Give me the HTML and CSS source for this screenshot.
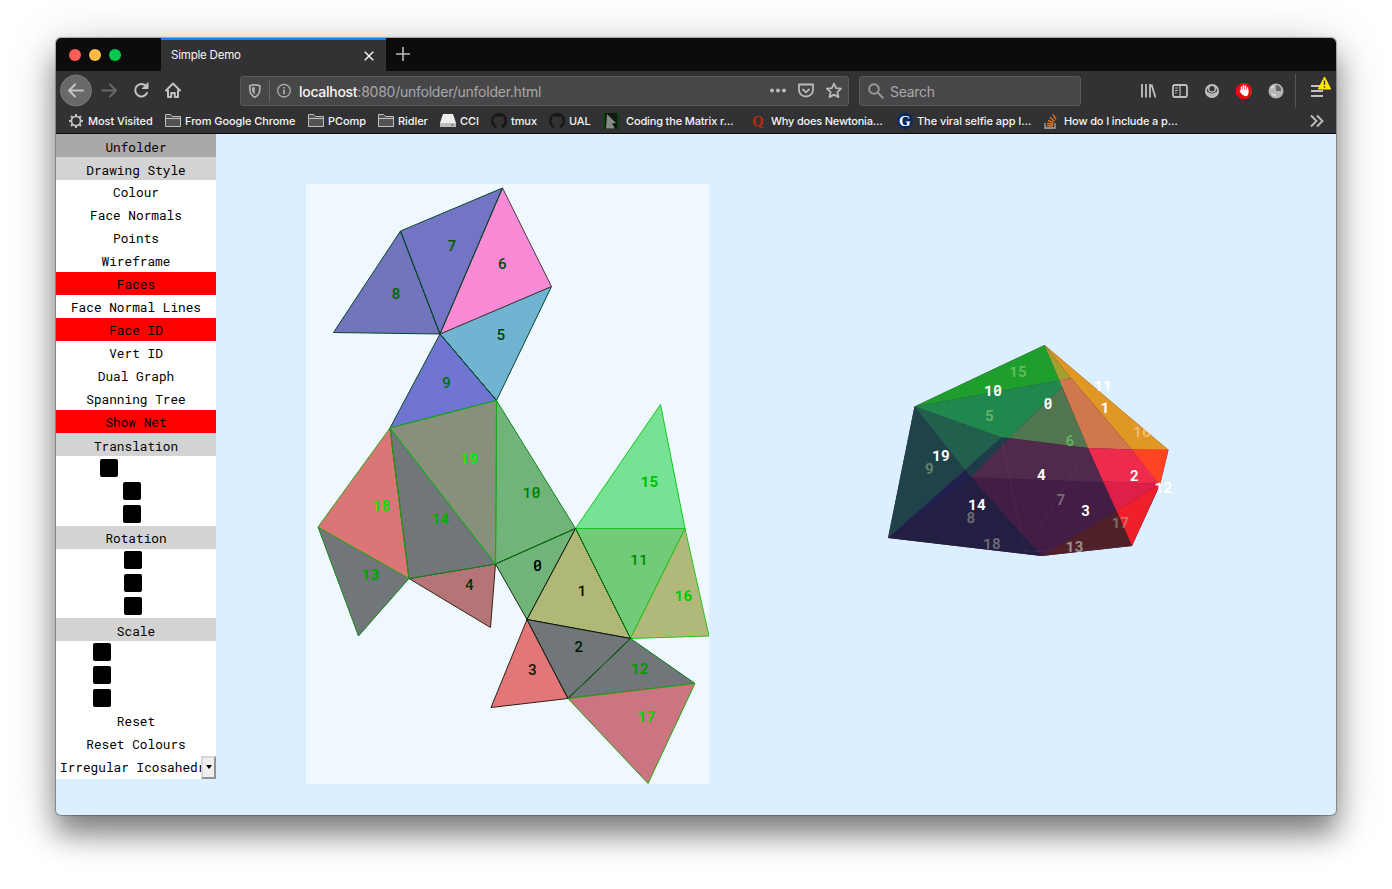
FILE: index.html
```html
<!DOCTYPE html>
<html lang="en">
<head>
<meta charset="utf-8">
<title>Simple Demo</title>
<link rel="stylesheet" href="styles.css">
</head>
<body>
<div class="window">
  <div class="tabs">
    <div class="lights"><i class="red"></i><i class="amber"></i><i class="green"></i></div>
    <div class="tab"><span class="tab-title">Simple Demo</span>
      <svg width="10" height="10" viewBox="0 0 10 10"><path d="M.8.8l8.4 8.4M9.2.8L.8 9.2" stroke="#f2f2f2" stroke-width="1.5"/></svg>
    </div>
    <svg class="plus" width="14" height="14" viewBox="0 0 14 14"><path d="M7 0v14M0 7h14" stroke="#bbb" stroke-width="1.6"/></svg>
  </div>
  <div class="toolbar">
    <svg width="128" height="34" viewBox="0 0 128 34" fill="none" stroke="#c3c3c5" stroke-width="2" stroke-linecap="round" stroke-linejoin="round">
      <circle cx="16" cy="16.500" r="15.500" fill="#69696a" stroke="#78787a" stroke-width="1"/>
      <path d="M9 16.500h14M15 10.500l-6 6 6 6"/>
      <path d="M42 16.500h14M50 10.500l6 6-6 6" stroke="#69696b"/>
      <path d="M87 19a6.200 6.200 0 1 1-1-7"/><path d="M88 9v5.500h-5.500z" fill="#c3c3c5" stroke-width="1"/>
      <path d="M106 16.500l7-7 7 7M108 16.500v6.500h3.200v-4h3.600v4h3.200V16.500"/>
    </svg>
    <div class="address">
      <svg width="52" height="28" viewBox="0 0 52 28" fill="none" stroke="#b1b1b3" stroke-width="1.700">
        <path d="M8.800 8.800q5-2 10 0v3.500q0 5.500-5 8-5-2.500-5-8z"/><path d="M13.800 10v7.500q-3-2-3-5.500v-1.500z" fill="#b1b1b3" stroke="none"/>
        <path d="M28.500 3v22" stroke="#646466" stroke-width="1"/>
        <circle cx="43" cy="13.700" r="6.300" stroke-width="1.300"/><path d="M43 12.700v4.500M43 9.900v1.500"/>
      </svg>
      <span class="url"><b>localhost</b>:8080/unfolder/unfolder.html</span>
      <svg width="78" height="28" viewBox="0 0 78 28" fill="none" stroke="#b9b9bb" stroke-width="1.800" stroke-linejoin="round">
        <g fill="#b9b9bb" stroke="none"><circle cx="8" cy="13.500" r="2"/><circle cx="14" cy="13.500" r="2"/><circle cx="20" cy="13.500" r="2"/></g>
        <path d="M35 7.500h14v5.500a7 6.500 0 0 1-14 0zM38.500 12l3.500 3.300 3.500-3.300"/>
        <path d="M70 6.500l2.100 4.600 5 .6-3.700 3.400 1 5-4.400-2.500-4.400 2.500 1-5-3.700-3.400 5-.6z"/>
      </svg>
    </div>
    <div class="search">
      <svg width="16" height="16" viewBox="0 0 16 16" fill="none" stroke="#98989a" stroke-width="2"><circle cx="6" cy="6" r="4.800"/><path d="M9.800 9.800l5.500 5.500"/></svg>
      <span>Search</span>
    </div>
    <svg class="tools" width="196" height="34" viewBox="0 0 196 34" fill="none" stroke="#c0c0c2" stroke-width="1.800">
      <path d="M2 10v13.500M6 10v13.500M10 10v13.500M11.500 10.500l4 13"/>
      <rect x="33" y="11" width="14" height="12" rx="2"/><path d="M40 11v12M35 14h3M35 16.500h3M35 19h2" stroke-width="1.200"/>
      <circle cx="72" cy="17" r="6" stroke-width="2"/><circle cx="72" cy="14.700" r="3.300" stroke-width="1.400" fill="#323234"/><path d="M67 18.500q5 4.500 10 0" stroke-width="2.200"/>
      <path d="M100.700 9h6.600l4.700 4.700v6.600l-4.700 4.700h-6.600L96 20.300v-6.600z" fill="#e40d0d" stroke="none"/>
      <path d="M101.500 17v-4M103.500 17v-5.500M105.500 17v-5M107.500 18v-4" stroke="#fff" stroke-width="1.500" stroke-linecap="round"/><path d="M100.500 16h8v3q-1 4-4 3-3-1-5-5z" fill="#fff" stroke="none"/>
      <circle cx="136" cy="17" r="7.500" fill="#b5b5b5" stroke="none"/><path d="M136 17V11q6 1 5 6z" fill="#666" stroke="none"/><path d="M132 20l4 2M131 14l3-2" stroke="#dedede"/>
      <path d="M155.500 0v34" stroke="#565658" stroke-width="1"/>
      <path d="M171 12h12M171 17h12M171 22h12" stroke-width="2"/>
      <path d="M184.500 3.500l6.200 12h-12.400z" transform="translate(0 -.5)" fill="#ffe900" stroke="#ffe900" stroke-width="1" stroke-linejoin="round"/><path d="M184.500 6.500v4.500M184.500 12.300v1.500" stroke="#3b3a10" stroke-width="1.400"/>
    </svg>
  </div>
  <div class="bookmarks">
    <div class="mark w97"><svg width="16" height="16" viewBox="0 0 16 16" fill="none" stroke="#c0c0c2"><circle cx="8" cy="8" r="4.600" stroke-width="1.800"/><path d="M8 1v2.500M8 12.500V15M1 8h2.500M12.500 8H15M3 3l2 2M11 11l2 2M3 13l2-2M11 5l2-2" stroke-width="2"/></svg><span>Most Visited</span></div>
    <div class="mark w143"><svg width="16" height="16" viewBox="0 0 16 16"><path d="M.5 13.500v-12h5l2 2h8v10zM.5 5.500h15" fill="#535355" stroke="#c0c0c2"/></svg><span>From Google Chrome</span></div>
    <div class="mark w70"><svg width="16" height="16" viewBox="0 0 16 16"><path d="M.5 13.500v-12h5l2 2h8v10zM.5 5.500h15" fill="#535355" stroke="#c0c0c2"/></svg><span>PComp</span></div>
    <div class="mark w62"><svg width="16" height="16" viewBox="0 0 16 16"><path d="M.5 13.500v-12h5l2 2h8v10zM.5 5.500h15" fill="#535355" stroke="#c0c0c2"/></svg><span>Ridler</span></div>
    <div class="mark w51"><svg width="16" height="16" viewBox="0 0 16 16"><path d="M3 1h10l3 9v4H0v-4z" fill="#eee"/><path d="M0 10h16v4H0z" fill="#bdbdbd"/><path d="M11 12h3" stroke="#666"/></svg><span>CCI</span></div>
    <div class="mark w58"><svg width="16" height="16" viewBox="0 0 16 16"><path d="M5.500 15.500v-2q-2 .5-3-1.500 1.800 1 3 0-3.500-1-3-5l1-2-.2-2 2.200.7a8 8 0 0 1 5 0l2.200-.7-.2 2 1 2q.5 4-3 5 .5 1 .3 3.500A8 8 0 1 0 5.500 15.500z" fill="#171718"/></svg><span>tmux</span></div>
    <div class="mark w54"><svg width="16" height="16" viewBox="0 0 16 16"><path d="M5.500 15.500v-2q-2 .5-3-1.500 1.800 1 3 0-3.500-1-3-5l1-2-.2-2 2.200.7a8 8 0 0 1 5 0l2.200-.7-.2 2 1 2q.5 4-3 5 .5 1 .3 3.500A8 8 0 1 0 5.500 15.500z" fill="#171718"/></svg><span>UAL</span></div>
    <div class="mark wide w147"><svg width="16" height="16" viewBox="0 0 16 16"><path d="M0 0h16v16H0z" fill="#121712"/><path d="M1 0v16M15 0v16" stroke="#07540f" stroke-width="1.500"/><path d="M4 1l9 9-4 .5 3 5H3z" fill="#858c85"/></svg><span>Coding the Matrix r…</span></div>
    <div class="mark w147 q"><svg width="16" height="16" viewBox="0 0 16 16"><text x="2" y="13" class="serif" fill="#b92b11">Q</text></svg><span>Why does Newtonia…</span></div>
    <div class="mark w147"><svg width="16" height="16" viewBox="0 0 16 16"><circle cx="8" cy="8" r="8" fill="#052962"/><text x="2" y="13" class="serif" fill="#fff">G</text></svg><span>The viral selfie app I…</span></div>
    <div class="mark last"><svg width="16" height="16" viewBox="0 0 16 16" fill="none"><path d="M1 10v5h10v-5" stroke="#aaa" stroke-width="1.300"/><path d="M3 12.700h6M3.200 10.200l6 1M4 7.300l5.500 2.300M6 4.200l4.500 4M9 1.500l3 5" stroke="#e87922" stroke-width="1.400"/></svg><span>How do I include a p…</span></div>
    <svg class="more" width="14" height="14" viewBox="0 0 14 14"><path d="M1 1.500L6.500 7 1 12.500M7 1.500L12.500 7 7 12.500" fill="none" stroke="#c0c0c2" stroke-width="1.800"/></svg>
  </div>
  <div class="page">
    <div class="side">
      <div class="row title">Unfolder</div>
      <div class="row head">Drawing Style</div>
      <div class="row">Colour</div><div class="row">Face Normals</div><div class="row">Points</div><div class="row">Wireframe</div>
      <div class="row on">Faces</div><div class="row">Face Normal Lines</div><div class="row on">Face ID</div>
      <div class="row">Vert ID</div><div class="row">Dual Graph</div><div class="row">Spanning Tree</div><div class="row on">Show Net</div>
      <div class="row head">Translation</div>
      <div class="sliders translation"><i class="p44"></i><i class="p67"></i><i class="p67"></i></div>
      <div class="row head rotation">Rotation</div>
      <div class="sliders"><i class="p68"></i><i class="p68"></i><i class="p68"></i></div>
      <div class="row head">Scale</div>
      <div class="sliders"><i class="p37"></i><i class="p37"></i><i class="p37"></i></div>
      <div class="row reset">Reset</div><div class="row reset">Reset Colours</div>
      <div class="select"><span>Irregular Icosahedron</span><div class="drop"><b></b></div></div>
    </div>
    <svg class="net" width="403" height="600" viewBox="306 184 403 600">
      <g stroke-width="1" stroke-linejoin="round">
        <g stroke="#08452b">
          <path d="M400.500 231L333.500 332.500 440 334z" fill="#7274bd"/>
          <path d="M400.500 231L502.500 188 440 334z" fill="#7474c4"/>
          <path d="M440 334L551.500 286.500 496.500 400.500z" fill="#70b4d2"/>
          <path d="M502.500 188L551.500 286.500 440 334z" fill="#fa8ad5" stroke="#473b42"/>
          <path d="M440 334L496.500 400.500 390 428z" fill="#7075d2"/>
          <path d="M502.500 188L440 334 400.500 231M440 334L496.500 400.500" fill="none"/>
        </g>
        <path d="M496.500 400.500L575.500 528.500 495.500 564z" fill="#70b479" stroke="#118417"/>
        <path d="M575.500 528.500L527 619.500 495.500 564z" fill="#70b479" stroke="#102d10"/>
        <path d="M575.500 528.500L685 528.500 630.500 638.500z" fill="#72cb79" stroke="#079411"/>
        <path d="M575.500 528.500L660.500 404.500 685 528.500z" fill="#77e194" stroke="#0bcb17"/>
        <path d="M685 528.500L709 636 630.500 638.500z" fill="#b1b97a" stroke="#25c515"/>
        <path d="M575.500 528.500L630.500 638.500 527 619.500z" fill="#b0b878" stroke="#111a05"/>
        <path d="M575.500 528.500L630.500 638.500" stroke="#087a0b"/>
        <path d="M527 619.500L568 698.500 491 707.500z" fill="#e27678" stroke="#32200f"/>
        <path d="M630.500 638.500L695 683.500 568 698.500z" fill="#707679" stroke="#08750d"/>
        <path d="M527 619.500L630.500 638.500 568 698.500z" fill="#707679" stroke="#07170b"/>
        <path d="M630.500 638.500L568 698.500" stroke="#08650d"/>
        <path d="M568 698.500L695 683.500 648 783.500z" fill="#ca7581" stroke="#25a40d"/>
        <path d="M409 578.500L495.500 564 490.500 627.500z" fill="#b57478" stroke="#332510"/>
        <path d="M318 527L409 578.500 358.500 636z" fill="#707679" stroke="#128515"/>
        <path d="M390 428L409 578.500 318 527z" fill="#da7578" stroke="#35a40d"/>
        <path d="M390 428L495.500 564 409 578.500z" fill="#707679" stroke="#0c8413"/>
        <path d="M390 428L496.500 400.500 495.500 564z" fill="#86907a" stroke="#08b50d"/>
        <path d="M409 578.500L390 428" stroke="#309019"/><path d="M495.500 564L575.500 528.500" stroke="#087a11"/>
      </g>
      <g class="nums">
        <text x="452" y="251" fill="#005900">7</text><text x="502.500" y="269" fill="#004d00">6</text><text x="396" y="299" fill="#006500">8</text><text x="501" y="340" fill="#004200">5</text><text x="446.500" y="388" fill="#007200">9</text>
        <text x="531.500" y="498" fill="#007f00">10</text><text x="537.500" y="571" fill="#000">0</text><text x="582" y="596" fill="#000b00">1</text><text x="579" y="652" fill="#001600">2</text><text x="532.500" y="675" fill="#002000">3</text><text x="469.500" y="590" fill="#003300">4</text><text x="639" y="565" fill="#008c00">11</text>
        <g class="bold"><text x="469.500" y="464" fill="#00f200">19</text><text x="381.500" y="511" fill="#00e500">18</text><text x="440.500" y="524" fill="#00b200">14</text><text x="370.500" y="580" fill="#00a500">13</text><text x="649.500" y="487" fill="#00bf00">15</text><text x="683.500" y="601" fill="#00cc00">16</text><text x="640" y="674" fill="#009900">12</text><text x="646.500" y="722" fill="#00d800">17</text></g>
      </g>
    </svg>
    <svg class="solid" width="300" height="230" viewBox="880 335 300 230">
      <path d="M1044.500 345L914.500 406.500 888 538 1041.500 556 1132 546 1160 485 1168.500 450z" fill="#421e45"/>
      <path d="M1044.500 345L914.500 406.500 1059.500 380.500z" fill="#1e9e2d"/>
      <path d="M914.500 406.500L1059.500 380.500 1063 386 1009 438 1001.500 437.500z" fill="#1f894d"/>
      <path d="M1062 387L1088 448 1009 438z" fill="#50754f"/>
      <path d="M1044.500 345L1071 378 1059.500 380.500z" fill="#a3a02f"/>
      <path d="M1044.500 345L1168.500 450 1131.700 449.500 1071 378z" fill="#e09723"/>
      <path d="M1059.500 380.500L1071 378 1131.700 449.500 1088 448z" fill="#d0784b"/>
      <path d="M1088 448L1131.700 449.500 1160 484 1103 481.500z" fill="#ee2b4d"/>
      <path d="M1103 481L1160 484 1116.500 511z" fill="#de2048"/>
      <path d="M1131.700 449.500H1168.500L1160 485z" fill="#ff4423"/>
      <path d="M1160 484L1132 546 1116.500 511z" fill="#ef2029"/>
      <path d="M1009 438L1088 448 1103 482 971 477z" fill="#502a4c"/>
      <path d="M1041.500 556L1116.500 511 1132 546z" fill="#4f2027"/>
      <path d="M888 538L971 477 1041.500 556z" fill="#231f42"/>
      <path d="M888 538L965 470 971 477z" fill="#1f1f50"/>
      <path d="M914.500 406.500L888 538 965 470z" fill="#1f424b"/>
      <path d="M914.500 406.500L1001.500 437.500 965 470z" fill="#20604d"/>
      <path d="M1001.500 437.500L1009 438 971 477 965 470z" fill="#1f3c4b"/>
      <path d="M1044.500 345L1001.500 437.500 1025 552 1088 448M1025 552L1132 546" fill="none" stroke="#99a" stroke-opacity=".11" stroke-width=".8"/>
      <g class="nums bold">
        <g fill="#d8f0a0" fill-opacity=".38"><text x="1018" y="377">15</text><text x="989.500" y="421">5</text><text x="929.500" y="474">9</text></g>
        <text x="1070" y="446" fill="#65b060">6</text>
        <g fill="#bdbdb0" fill-opacity=".48"><text x="971" y="523">8</text><text x="992" y="549">18</text><text x="1061" y="505">7</text><text x="1120.500" y="528">17</text></g>
        <text x="1142" y="437" fill="#ffe3bd" fill-opacity=".5">16</text><text x="1074.500" y="552" fill="#99908c">13</text>
        <g fill="#fff"><text x="993" y="396">10</text><text x="1048" y="409">0</text><text x="1103" y="391">11</text><text x="1105" y="413">1</text><text x="941" y="461">19</text><text x="1041.500" y="480">4</text><text x="1134.500" y="481">2</text><text x="1163.500" y="493">12</text><text x="977" y="510">14</text><text x="1085.500" y="516">3</text></g>
      </g>
    </svg>
  </div>
</div>
</body>
</html>
```
FILE: styles.css
```css
* { box-sizing: border-box; }
body { margin: 0; padding: 38px 56px; height: 889px; overflow: hidden; background: #fff; font-family: Inter, "Liberation Sans", sans-serif; }
svg { display: block; flex: none; }
.window { width: 1280px; height: 777px; border-radius: 5px; overflow: hidden; background: #dcefff; box-shadow: 0 0 1px 1px rgba(0,0,0,.28), 0 19px 28px rgba(0,0,0,.42), 0 8px 50px rgba(0,0,0,.22); }
.tabs { display: flex; align-items: center; height: 33px; background: #0c0c0d; }
.lights { display: flex; gap: 8px; width: 105px; padding: 1px 0 0 13px; }
.lights i { width: 12px; height: 12px; border-radius: 50%; }
.red { background: #ff5b57; }
.amber { background: #ffbb46; }
.green { background: #00ca4f; }
.tab { display: flex; align-items: center; justify-content: space-between; width: 225px; height: 33px; padding: 0 12px 0 10px; border-top: 2px solid #0a84ff; background: #323234; color: #f7f7f8; font-size: 11.5px; letter-spacing: -.2px; }
.tab-title { padding-bottom: 1px; }
.tab svg { margin-top: 1px; }
.plus { margin: -2px 0 0 10px; }
.toolbar { display: flex; align-items: center; height: 41px; padding: 0 0 1px 4px; background: #323234; }
.address, .search { display: flex; align-items: center; flex: none; height: 30px; border: 1px solid #5a5a5c; border-radius: 3px; background: #474749; color: #a8a8aa; font-size: 14px; }
.address { width: 609px; margin-left: 52px; padding-right: 6px; }
.url { flex: 1; padding: 1px 0 0 6px; letter-spacing: -.24px; white-space: nowrap; }
.url b { color: #f5f5f6; font-weight: 500; letter-spacing: -.28px; }
.search { width: 222px; margin-left: 10px; padding-left: 8px; gap: 6px; letter-spacing: -.3px; }
.search span { padding-top: 1px; }
.tools { margin-left: 59px; }
.bookmarks { display: flex; align-items: center; height: 22px; padding: 0 12px 4px; background: #323234; border-bottom: 1px solid #0c0c0d; }
.mark { display: flex; align-items: center; gap: 4px; flex: none; color: #f5f5f6; font-size: 11px; font-weight: 500; letter-spacing: -.07px; white-space: nowrap; }
.w97 { width: 97px; } .w143 { width: 143px; } .w70 { width: 70px; } .w62 { width: 62px; } .w51 { width: 51px; } .w58 { width: 58px; } .w54 { width: 54px; } .w147 { width: 147px; }
.wide { gap: 7px; letter-spacing: -.15px; }
.q { gap: 5px; letter-spacing: -.2px; }
.last { gap: 4px; letter-spacing: -.13px; }
.more { margin: 0 0 0 auto; }
.serif { font: bold 15px "Liberation Serif", serif; }
.page { display: flex; align-items: flex-start; height: 681px; }
.side { width: 160px; flex: none; background: #fff; font: 12.75px/23px "Roboto Mono", "DejaVu Sans Mono", monospace; color: #000; }
.row { height: 23px; padding-top: 1px; text-align: center; }
.title { background: #a9a9a9; }
.head { background: #d3d3d3; }
.title, .head { padding-top: 2px; }
.rotation { padding-top: 1px; }
.reset { padding-top: 0; }
.on { background: #f00; }
.sliders { display: flex; flex-direction: column; gap: 5px; height: 69px; padding-top: 2px; }
.translation { height: 70px; padding-top: 3px; }
.sliders i { width: 18px; height: 18px; border-radius: 2px; background: #000; }
.p37 { margin-left: 37px; } .p44 { margin-left: 44px; } .p67 { margin-left: 67px; } .p68 { margin-left: 68px; }
.select { display: flex; height: 23px; }
.select span { width: 145px; padding: 0 0 0 4px; overflow: hidden; white-space: nowrap; }
.drop { display: flex; justify-content: center; width: 15px; height: 23px; padding-top: 7px; border: 2px solid; border-color: #d8d8d8 #929292 #929292 #d8d8d8; background: #efefef; }
.drop b { width: 0; height: 0; border: 3px solid transparent; border-top: 4px solid #000; }
.net { margin: 50px 0 0 90px; background: #f0f8ff; }
.solid { margin: 201px 0 0 171px; }
.nums { font: 500 15px "Roboto Mono", "DejaVu Sans Mono", monospace; text-anchor: middle; }
.nums text { stroke: none; }
.bold, .nums .bold { font-weight: 700; }
```
